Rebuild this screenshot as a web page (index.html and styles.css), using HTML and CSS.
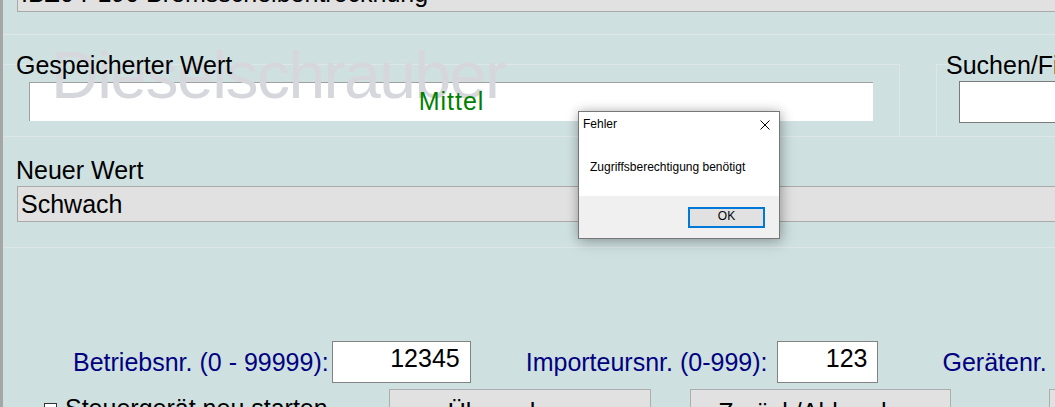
FILE: index.html
```html
<!DOCTYPE html>
<html lang="de">
<head>
<meta charset="utf-8">
<title>Dieselschrauber</title>
<link rel="stylesheet" href="styles.css">
</head>
<body>
<div class="app">
  <div class="gray-field topfield">IBZ0 P190 Bremsscheibentrocknung</div>
  <div class="rule rule-top"></div>
  <div class="grouprow">
    <div class="group group-stored">
      <div class="label"><span class="txt">Gespeicherter Wert</span></div>
      <div class="stored-field"><span class="txt">Mittel</span></div>
    </div>
    <div class="group group-search">
      <div class="label"><span class="txt">Suchen/Filter</span></div>
      <div class="search-field"></div>
    </div>
  </div>
  <div class="rule"></div>
  <div class="newrow">
    <div class="label newlabel">Neuer Wert</div>
    <div class="gray-field">Schwach</div>
  </div>
  <div class="rule"></div>
  <div class="numbers">
    <div class="num-label">Betriebsnr. (0 - 99999):</div>
    <div class="num-input in-betrieb">12345</div>
    <div class="num-label lbl-import">Importeursnr. (0-999):</div>
    <div class="num-input in-import">123</div>
    <div class="num-label lbl-geraet">Gerätenr.</div>
  </div>
  <div class="actions">
    <div class="checkopt">
      <span class="checkbox"></span>
      <span class="check-label">Steuergerät neu starten</span>
    </div>
    <div class="btn btn1">Übernehmen</div>
    <div class="btn btn2">Zurück/Abbrechen</div>
    <div class="btn btn3">Schließen</div>
  </div>

  <div class="watermark">Dieselschrauber</div>

  <div class="dialog">
    <div class="dlg-title">
      <span>Fehler</span>
      <svg class="dlg-close" width="10" height="10" viewBox="0 0 10 10">
        <path d="M0.5 0.5 L9.5 9.5 M9.5 0.5 L0.5 9.5" stroke="#000" stroke-width="1" fill="none"/>
      </svg>
    </div>
    <div class="dlg-msg">Zugriffsberechtigung benötigt</div>
    <div class="dlg-footer">
      <div class="ok">OK</div>
    </div>
  </div>
</div>
</body>
</html>
```
FILE: styles.css
```css
html, body {
  margin: 0;
  padding: 0;
}
body {
  width: 1055px;
  height: 407px;
  overflow: hidden;
  background: #cfe0e0;
  font-family: "Liberation Sans", Arial, sans-serif;
  font-size: 25px;
  line-height: 28px;
  color: #000;
}
.app {
  position: relative;
  display: flex;
  flex-direction: column;
  height: 407px;
  box-sizing: border-box;
  border-left: 3px solid #a6a6a6;
  overflow: hidden;
}
.gray-field {
  flex: none;
  box-sizing: border-box;
  height: 36px;
  margin-left: 14px;
  padding: 3px 3px;
  background: #e1e1e1;
  border: 1px solid #a9a9a9;
  border-right: 0;
  white-space: nowrap;
}
.topfield {
  margin-top: -24px;
  padding-top: 2px;
}
.rule {
  flex: none;
  height: 1px;
  background: #dde7e7;
}
.rule-top {
  margin-top: 22px;
}
.grouprow {
  flex: none;
  display: flex;
  height: 101px;
}
.group {
  box-sizing: border-box;
  margin-top: 29px;
  height: 72px;
  border-top: 1px solid #dde7e7;
}
.group-stored {
  flex: none;
  width: 897px;
  padding-left: 13px;
  border-right: 1px solid #dde7e7;
}
.group-search {
  flex: 1;
  margin-left: 36px;
  padding-left: 9px;
  border-left: 1px solid #dde7e7;
}
.group .label {
  margin-top: -14px;
  white-space: nowrap;
}
.txt {
  position: relative;
  z-index: 2;
}
.stored-field {
  box-sizing: border-box;
  width: 844px;
  height: 39px;
  margin-top: 3px;
  margin-left: 13px;
  padding-top: 4px;
  background: #fff;
  border-top: 1px solid #a0a0a0;
  border-left: 1px solid #a0a0a0;
  text-align: center;
  color: #008000;
  letter-spacing: 1px;
}
.search-field {
  box-sizing: border-box;
  width: 200px;
  height: 42px;
  margin-top: 2px;
  margin-left: 13px;
  background: #fff;
  border: 1px solid #7a7a7a;
}
.newrow {
  flex: none;
  height: 110px;
}
.newlabel {
  margin-top: 19px;
  padding-left: 13px;
  margin-bottom: 2px;
}
.numbers {
  flex: none;
  display: flex;
  align-items: flex-start;
  height: 42px;
  margin-top: 93px;
  padding-left: 70px;
}
.num-label {
  flex: none;
  margin-top: 7px;
  color: #000080;
  white-space: nowrap;
}
.num-input {
  flex: none;
  box-sizing: border-box;
  height: 42px;
  padding: 2px 10px 0 0;
  background: #fff;
  border: 1px solid #828282;
  text-align: right;
}
.in-betrieb {
  width: 139px;
  margin-left: 3px;
}
.lbl-import {
  margin-left: 55px;
}
.in-import {
  width: 101px;
  margin-left: 10px;
}
.lbl-geraet {
  margin-left: 64px;
}
.actions {
  flex: none;
  display: flex;
  align-items: flex-start;
  margin-top: 6px;
}
.checkopt {
  flex: 0 0 386px;
  box-sizing: border-box;
  display: flex;
  align-items: flex-start;
  padding-left: 41px;
}
.checkbox {
  flex: none;
  width: 13px;
  height: 13px;
  box-sizing: border-box;
  margin-top: 14px;
  background: #fff;
  border: 1px solid #333;
}
.check-label {
  margin-left: 8px;
  margin-top: 5px;
  white-space: nowrap;
}
.btn {
  flex: none;
  box-sizing: border-box;
  height: 44px;
  padding-top: 8px;
  background: #e1e1e1;
  border: 1px solid #adadad;
  text-align: center;
  white-space: nowrap;
}
.btn1 {
  width: 262px;
}
.btn2 {
  width: 261px;
  margin-left: 39px;
}
.btn3 {
  width: 200px;
  margin-left: 98px;
}
.watermark {
  position: absolute;
  left: 48px;
  top: 42px;
  z-index: 1;
  font-size: 66px;
  line-height: 66px;
  letter-spacing: -1.5px;
  color: #d6d7dc;
  white-space: nowrap;
  pointer-events: none;
}
.dialog {
  position: absolute;
  left: 575px;
  top: 111px;
  z-index: 5;
  width: 202px;
  height: 128px;
  box-sizing: border-box;
  display: flex;
  flex-direction: column;
  background: #fff;
  border: 1px solid #777;
  box-shadow: 0 0 10px rgba(0, 0, 0, 0.22), 2px 4px 14px rgba(0, 0, 0, 0.18);
  font-size: 12px;
  line-height: 16px;
  color: #000;
}
.dlg-title {
  display: flex;
  justify-content: space-between;
  align-items: flex-start;
  padding: 4px 9px 0 4px;
}
.dlg-close {
  margin-top: 4px;
}
.dlg-msg {
  margin-top: 27px;
  padding-left: 11px;
  white-space: nowrap;
}
.dlg-footer {
  margin-top: auto;
  height: 42px;
  box-sizing: border-box;
  display: flex;
  justify-content: flex-end;
  padding: 11px 14px 0 0;
  background: #f0f0f0;
}
.ok {
  width: 77px;
  height: 21px;
  box-sizing: border-box;
  border: 2px solid #0078d7;
  background: #e1e1e1;
  text-align: center;
  line-height: 15px;
}
```
